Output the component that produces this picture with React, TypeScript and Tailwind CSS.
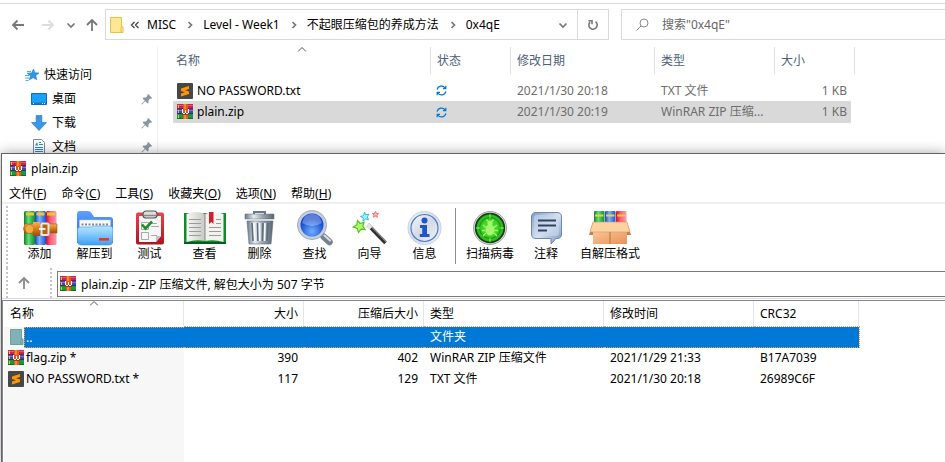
import type { ReactNode } from "react";

function WinRarIcon() {
  return (
    <svg viewBox="0 0 16 16" className="size-4 shrink-0" shapeRendering="crispEdges" aria-hidden="true">
      <path fill="#c92452" d="M0 0h16v5H0z" />
      <path fill="#8c1638" d="M0 4h16v1H0z" />
      <path fill="#e0557d" d="M0 1h16v1H0z" />
      <path fill="#3b4bb0" d="M0 5h16v5H0z" />
      <path fill="#27307c" d="M0 9h16v1H0z" />
      <path fill="#6a7ad0" d="M0 6h16v1H0z" />
      <path fill="#199a35" d="M0 10h16v5H0z" />
      <path fill="#0d6b23" d="M0 14h16v1H0z" />
      <path fill="#f2c230" d="M1 1h1v3H1zM1 6h1v3H1zM1 11h1v3H1z" />
      <path fill="#d9601a" d="M6 0h5v15H6z" />
      <path fill="#f08a34" d="M7 0h2v15H7z" />
      <path fill="#9a3a20" d="M5 5h7v6H5z" />
      <path fill="#e2541b" d="M6 5h5v4H6z" />
      <path fill="#fff" d="M5 5h1v4H5zM11 5h1v4h-1zM6 9h2v1H6zM9 9h2v1H9zM8 6h1v3H8z" />
    </svg>
  );
}

function SublimeIcon() {
  return (
    <svg viewBox="0 0 16 16" className="size-4 shrink-0" aria-hidden="true">
      <rect width="16" height="16" rx="1" fill="#474747" />
      <path fill="#ff9800" d="M4 5.400 12 3v2.900L8 7.200l4 1.300v2.600L4 13.400v-2.900l4-1.300L4 8z" />
    </svg>
  );
}

function FolderIcon({ fill, stroke, name }: { fill: string; stroke: string; name: string }) {
  return (
    <svg viewBox="0 0 14 16" className={name} aria-hidden="true">
      <path fill={fill} stroke={stroke} d="M.5.5h11v9.5h1.500v5.500H.5z" />
      <path fill="none" stroke={stroke} d="M11 15v-4.500l1-1" />
    </svg>
  );
}

function Arrow({ dir, color }: { dir: "left" | "right" | "up"; color: string }) {
  const d = {
    left: "M14 8H3M7.500 3.500 3 8l4.500 4.500",
    right: "M2 8h11M8.500 3.500 13 8l-4.500 4.500",
    up: "M8 14V3M3 8l5-5 5 5",
  };
  return (
    <svg viewBox="0 0 16 16" className="size-4" fill="none" stroke={color} strokeWidth="1.800" aria-hidden="true">
      <path d={d[dir]} />
    </svg>
  );
}

function Chevron({ down = false }: { down?: boolean }) {
  return (
    <svg viewBox="0 0 10 10" className="size-2.5 shrink-0" fill="none" stroke="#777" strokeWidth="1.700" aria-hidden="true">
      <path d={down ? "M1.500 3.500 5 7l3.500-3.500" : "M3.500 2l3 3-3 3"} />
    </svg>
  );
}

function SortMark() {
  return (
    <svg viewBox="0 0 9 5" className="absolute top-0 left-1/2 h-[5px] w-[9px] -translate-x-1/2" fill="none" stroke="#555" aria-hidden="true">
      <path d="M.5 4.500l4-4 4 4" />
    </svg>
  );
}

function SyncIcon() {
  return (
    <svg viewBox="0 0 12 12" className="ml-[5px] size-[11px]" fill="none" stroke="#0078d7" strokeWidth="1.300" role="img" aria-label="同步中">
      <path d="M1.200 5A4.900 4.900 0 0 1 10 3.300M10.800 7A4.900 4.900 0 0 1 2 8.700M10.700.8v3.100H7.600M1.300 11.200V8.100h3.100" />
    </svg>
  );
}

function PinIcon() {
  return (
    <svg viewBox="0 0 12 12" className="size-3" aria-hidden="true">
      <path fill="#8a98a5" d="M7 .8 11.200 5l-1.200.7-.7-.2-1.800 1.800.1 2.200-1 1L4.300 8.200 1 11.600l-.6-.6 3.400-3.300L1.500 5.400l1-1 2.200.1L6.500 2.700l-.2-.7z" />
    </svg>
  );
}

const sideIcons: Record<string, ReactNode> = {
  star: (
    <svg viewBox="0 0 16 16" className="size-4" aria-hidden="true">
      <path fill="#2a9ae8" stroke="#1a78c8" strokeWidth=".6" d="M9.500 2l1.300 3.800 4.200.2-3.300 2.600 1.100 4.200-3.600-2.200-4 2.300 1.400-4L3.200 6.200l4.600-.3z" />
      <path stroke="#45acee" d="M1 8.500h4M1 11h4M1.500 13.500h3M3 4.500h4" />
    </svg>
  ),
  desktop: (
    <svg viewBox="0 0 16 16" className="size-4" aria-hidden="true">
      <path fill="#18a0fb" stroke="#0b6fbd" d="M.5 2.500h15v11H.5z" />
      <path fill="#1478c8" d="M1 11.500h14V13H1z" />
      <path fill="#d8efff" d="M2 12h1v1H2zM11 12h1v1h-1zM13 12h1v1h-1z" />
    </svg>
  ),
  download: (
    <svg viewBox="0 0 16 16" className="size-4" aria-hidden="true">
      <path fill="#3a97e8" stroke="#2479c6" strokeWidth=".7" d="M5.200.6h5.600v7h4.600L8 15.500.6 7.600h4.600z" />
    </svg>
  ),
  document: (
    <svg viewBox="0 0 16 16" className="size-4" aria-hidden="true">
      <path fill="#fff" stroke="#7d8790" d="M2.500.5h8l3 3v12h-11z" />
      <path stroke="#2a8ad6" d="M8 3.500h2M8 5.500h4M4 8.500h8M4 10.500h8M4 12.500h8" />
      <path fill="#2a8ad6" d="M4 6.500 6 3l1 3.500z" />
    </svg>
  ),
};

const sideItems = [
  { icon: "desktop", label: "桌面" },
  { icon: "download", label: "下载" },
  { icon: "document", label: "文档" },
];

const crumbs = ["MISC", "Level - Week1", "不起眼压缩包的养成方法", "0x4qE"];

const explorerRows = [
  { icon: <SublimeIcon />, name: "NO PASSWORD.txt", date: "2021/1/30 20:18", type: "TXT 文件", size: "1 KB", selected: false },
  { icon: <WinRarIcon />, name: "plain.zip", date: "2021/1/30 20:19", type: "WinRAR ZIP 压缩...", size: "1 KB", selected: true },
];

function Explorer() {
  return (
    <section className="h-[153px] pt-[3px]">
      <div className="flex h-11 items-start border-t border-[#d9d9d9] pt-[5px]">
        <nav className="flex h-[31px] w-[105px] shrink-0 items-center pl-2.5">
          <button aria-label="后退"><Arrow dir="left" color="#777" /></button>
          <button aria-label="前进" className="ml-3.5"><Arrow dir="right" color="#dcdcdc" /></button>
          <button aria-label="最近位置" className="ml-2.5"><Chevron down /></button>
          <button aria-label="上移" className="ml-2"><Arrow dir="up" color="#777" /></button>
        </nav>
        <div className="flex h-[31px] w-[504px] shrink-0 items-center border border-[#d9d9d9]">
          <FolderIcon fill="#ffe793" stroke="#eac04c" name="ml-1 h-4 w-3.5 shrink-0" />
          <svg viewBox="0 0 10 10" className="ml-1.5 size-2.5" fill="none" stroke="#444" strokeWidth="1.300" aria-hidden="true">
            <path d="M4.500 2l-3 3 3 3M8.500 2l-3 3 3 3" />
          </svg>
          <ol className="ml-[7px] flex items-center">
            {crumbs.map((crumb, i) => (
              <li key={crumb} className="flex items-center">
                {i > 0 && <span className="mr-2 ml-[9px] flex"><Chevron /></span>}
                <a href="#" className="whitespace-nowrap">{crumb}</a>
              </li>
            ))}
          </ol>
          <button aria-label="历史记录" className="mr-[9px] ml-auto"><Chevron down /></button>
          <button aria-label="刷新" className="flex h-full w-[31px] items-center justify-center border-l border-[#d9d9d9]">
            <svg viewBox="0 0 12 12" className="size-3" fill="none" stroke="#777" strokeWidth="1.600" aria-hidden="true">
              <path d="M8.500 2.600a4.200 4.200 0 1 1-5.500.5M1.500 1.800H5v3.400" />
            </svg>
          </button>
        </div>
        <label className="ml-3 flex h-[31px] flex-1 items-center border border-r-0 border-[#d9d9d9] pl-3.5">
          <svg viewBox="0 0 13 13" className="size-[13px] shrink-0" fill="none" stroke="#888" aria-hidden="true">
            <circle cx="8" cy="5" r="4" />
            <path d="M5 8 .5 12.500" />
          </svg>
          <input aria-label="搜索" placeholder={'搜索"0x4qE"'} className="ml-[13px] min-w-0 flex-1 outline-none placeholder:text-[#666]" />
        </label>
      </div>
      <div className="flex">
        <aside className="h-[106px] w-[158px] shrink-0 border-r border-[#f0f0f0] pt-4">
          <div className="flex h-6 items-center gap-1 pl-6">{sideIcons.star}快速访问</div>
          {sideItems.map((item) => (
            <div key={item.label} className="flex h-6 items-center gap-[5px] pr-1 pl-[31px]">
              {sideIcons[item.icon]}
              {item.label}
              <span className="ml-auto"><PinIcon /></span>
            </div>
          ))}
        </aside>
        <table className="ml-[15px] w-[682px] table-fixed border-separate border-spacing-0 self-start text-left text-[#6d6d6d]">
          <colgroup>
            <col className="w-[258px]" />
            <col className="w-20" />
            <col className="w-36" />
            <col className="w-[120px]" />
            <col className="w-20" />
          </colgroup>
          <thead className="text-[#4c607a]">
            <tr className="h-[33px]">
              {["名称", "状态", "修改日期", "类型", "大小"].map((head, i) => (
                <th key={head} className="p-0 align-top font-normal">
                  <div className={`relative flex h-[27px] items-center border-r border-[#e2e2e2] ${i === 0 ? "pl-[3px]" : "pl-1.5"}`}>
                    {head}
                    {i === 0 && <SortMark />}
                  </div>
                </th>
              ))}
            </tr>
          </thead>
          <tbody>
            {explorerRows.map((row) => (
              <tr key={row.name} className={row.selected ? "h-[22px] *:bg-[#d9d9d9]" : "h-[21px]"}>
                <td className="p-0 pl-1 text-black">
                  <div className="flex items-center gap-1">{row.icon}{row.name}</div>
                </td>
                <td className="p-0"><SyncIcon /></td>
                <td className="p-0 pl-1.5">{row.date}</td>
                <td className="p-0 pl-1.5 whitespace-nowrap">{row.type}</td>
                <td className="border-r-4 border-transparent bg-clip-padding p-0 pr-1 text-right">{row.size}</td>
              </tr>
            ))}
          </tbody>
        </table>
      </div>
    </section>
  );
}

/* Shared gradients for the large toolbar pictures. */
function Gradients() {
  return (
    <svg className="absolute size-0" aria-hidden="true">
      <defs>
        <linearGradient id="bookGreen"><stop offset="0" stopColor="#147a28" /><stop offset=".4" stopColor="#5fe07a" /><stop offset="1" stopColor="#128a2c" /></linearGradient>
        <linearGradient id="bookBlue"><stop offset="0" stopColor="#1746c0" /><stop offset=".4" stopColor="#7db2ff" /><stop offset="1" stopColor="#1c50cf" /></linearGradient>
        <linearGradient id="bookRed"><stop offset="0" stopColor="#c8102c" /><stop offset=".4" stopColor="#ff5b78" /><stop offset="1" stopColor="#f0a0b0" /></linearGradient>
        <linearGradient id="belt" x2="0" y2="1"><stop offset="0" stopColor="#f6b25a" /><stop offset=".5" stopColor="#d97a18" /><stop offset="1" stopColor="#9c4c08" /></linearGradient>
        <linearGradient id="folderBack" x2="0" y2="1"><stop offset="0" stopColor="#5fa0ff" /><stop offset="1" stopColor="#1e5fe0" /></linearGradient>
        <linearGradient id="folderFront" x2="0" y2="1"><stop offset="0" stopColor="#b9e6ff" /><stop offset=".5" stopColor="#7cc6ff" /><stop offset="1" stopColor="#3f9cf5" /></linearGradient>
        <linearGradient id="metal"><stop offset="0" stopColor="#6b7684" /><stop offset=".3" stopColor="#e3e9f0" /><stop offset=".6" stopColor="#9aa6b4" /><stop offset="1" stopColor="#5a6572" /></linearGradient>
        <linearGradient id="page"><stop offset="0" stopColor="#f8f8f6" /><stop offset="1" stopColor="#c8c8c4" /></linearGradient>
        <linearGradient id="redBoard" x2="0" y2="1"><stop offset="0" stopColor="#f0414d" /><stop offset="1" stopColor="#a81620" /></linearGradient>
        <radialGradient id="lens" cy=".75"><stop offset="0" stopColor="#6fb0ff" /><stop offset="1" stopColor="#1748cf" /></radialGradient>
        <linearGradient id="silver" x2="1" y2="1"><stop offset="0" stopColor="#f4f6f9" /><stop offset=".5" stopColor="#d4dae2" /><stop offset="1" stopColor="#f2f4f7" /></linearGradient>
        <radialGradient id="radar"><stop offset="0" stopColor="#5cf03c" /><stop offset="1" stopColor="#22b416" /></radialGradient>
        <linearGradient id="bubble" x2="1" y2="1"><stop offset="0" stopColor="#7f9cc4" /><stop offset=".5" stopColor="#d6e3f3" /><stop offset="1" stopColor="#7291bd" /></linearGradient>
        <linearGradient id="carton" x2="1" y2="1"><stop offset="0" stopColor="#f9c795" /><stop offset="1" stopColor="#e8935a" /></linearGradient>
      </defs>
    </svg>
  );
}

const pictures: Record<string, ReactNode> = {
  add: (
    <>
      <rect x="2" y="1" width="11" height="34" rx="1.500" fill="url(#bookGreen)" />
      <rect x="13" y="1" width="11" height="34" rx="1.500" fill="url(#bookBlue)" />
      <rect x="24" y="1" width="10.500" height="34" rx="1.500" fill="url(#bookRed)" />
      <path stroke="#f4c52e" strokeWidth="3" d="M4 4h8M14.500 4h8M25 4h8" />
      <path fill="url(#belt)" stroke="#a35a10" strokeWidth=".6" d="M3 14h32v9H3q-3-4.500 0-9z" />
      <circle cx="7.500" cy="19" r="4.500" fill="#f5aa42" stroke="#a35a10" strokeWidth=".6" />
      <path fill="url(#belt)" d="M11 12h7v14h-7z" />
      <rect x="19.500" y="13.500" width="7" height="11.500" rx="1" fill="#b76412" stroke="#e9e9e9" strokeWidth="2" />
      <path stroke="#f5f5f5" strokeWidth="1.800" d="M17 19h6.500" />
    </>
  ),
  extract: (
    <>
      <path fill="url(#folderBack)" d="M0 33V4q0-3 3-3h8q2 0 3.500 2L17 7h16q3 0 3 3v23z" />
      <path fill="#f7f9fc" stroke="#bccbe0" strokeWidth=".5" d="M2.500 10h31v11h-31z" />
      <path stroke="#808a96" strokeWidth="2" strokeDasharray="2 1.500" d="M4.500 14.500h27" />
      <path fill="url(#folderFront)" stroke="#3f92ea" strokeWidth=".6" d="M.4 20q0-3 3-3h9q2 0 3-.5t3-.5h14.500q3 0 3 3v12q0 4-4 4H4.400q-4 0-4-4z" />
      <rect x="22" y="28" width="10" height="2.600" fill="#e8391b" />
    </>
  ),
  test: (
    <>
      <rect x="4" y="2.500" width="28" height="32" rx="2" fill="url(#redBoard)" />
      <path fill="#f6f6f6" d="M7 6h22v20l-5 6H7z" />
      <path fill="#c2c2c2" d="M29 26l-5 6v-6z" />
      <path fill="none" stroke="#a8a8a8" d="M9.500 12.500h7v7h-7zM9.500 22.500h7v7h-7zM19 16.500h8M19 13.500h6M19 25.500h6" />
      <path fill="none" stroke="#1e8f2c" strokeWidth="2.600" d="M10 14.500l3.500 4 6.500-7" />
      <rect x="11" y="1" width="14" height="7" rx="3" fill="#dedede" stroke="#555" strokeWidth="1.200" />
      <path stroke="#888" strokeWidth="1.500" d="M12 5.500h12" />
    </>
  ),
  view: (
    <>
      <path fill="#128a2c" d="M0 3h42v31H0z" />
      <path fill="#0a5c1b" d="M0 32h42v2H0z" />
      <path fill="url(#page)" d="M2.500 4q10-4 18.500 0v27q-9-2-18.500 1z" />
      <path fill="#f2f2ef" d="M39.500 4q-10-4-18.500 0v27q9-2 18.500 1z" />
      <path stroke="#9a9a9a" d="M5 9.500h12M5 13.500h12M5 17.500h12M5 21.500h12M5 25.500h12M25 17.500h12M25 21.500h12M25 25.500h12M32 9.500h5M32 13.500h5" />
      <path stroke="#888" d="M21 4v27" />
      <path fill="#cf2030" d="M25 2h4.500v12l-2.200-2-2.300 2z" />
    </>
  ),
  remove: (
    <>
      <path fill="none" stroke="#68798c" strokeWidth="2" d="M12 4V2h11v2" />
      <path fill="url(#metal)" stroke="#60707f" strokeWidth=".5" d="M3 4h29v5H3z" />
      <path fill="url(#metal)" stroke="#5d6b7a" strokeWidth=".6" d="M5 11h26l-2 23H7z" />
      <path fill="none" stroke="#5e6d7d" strokeWidth="1.600" d="M10 13l1 18M15.500 13l.5 18M21 13l-.5 18M26 13l-1 18" />
      <path fill="none" stroke="#f5f8fb" strokeWidth="1.800" d="M12 13l1 18M17.500 13l.300 18M23 13l-.500 18" />
    </>
  ),
  find: (
    <>
      <path stroke="#76808c" strokeWidth="6.500" strokeLinecap="round" d="M26.500 26.500l6 5.500" />
      <path stroke="#d9dee4" strokeWidth="2" strokeLinecap="round" d="M27.500 25.500l5.500 5" />
      <circle cx="15" cy="15" r="13" fill="url(#lens)" stroke="#c4cdd9" strokeWidth="3" />
      <circle cx="15" cy="15" r="14.600" fill="none" stroke="#7f8b9b" strokeWidth=".6" />
      <path fill="#fff" opacity=".3" d="M5 13q2-9 10-9t10 9q-10 6-20 0z" />
    </>
  ),
  wizard: (
    <>
      <path stroke="#333" strokeWidth="3.600" d="M16 15l17.500 18" />
      <path stroke="#8d8d8d" strokeWidth="1.200" d="M16.500 13.500l18 18.500" />
      <path stroke="#e5e5e5" strokeWidth="4" d="M15.300 14.300l3.700 3.800" />
      <path fill="#b4f76a" stroke="#55c428" strokeWidth="1.200" d="M5.500 10.500l2.600 3 4-1.300-1.300 4 2.300 3.300-4-.3L6.500 22.500l-1.300-4L1 17l3.800-2.200z" />
      <path fill="#a5f2ff" stroke="#2fbfe0" d="M12.500 2l1.200 2.600 3.300-.4-1.800 2.600 1.300 3-3-.8-2.500 2.200.3-3-2.800-1.800 3.200-.7z" />
      <path fill="#ffb8b8" stroke="#ed6a6a" strokeWidth=".9" d="M23.500 1.500l.8 1.800 2.300.2-1.700 1.500.5 2.300-1.900-1.200-2 1.200.5-2.300-1.600-1.500 2.200-.2z" />
    </>
  ),
  info: (
    <>
      <circle cx="17.500" cy="18" r="16.500" fill="url(#silver)" stroke="#c9d0d9" />
      <circle cx="17.500" cy="18" r="13.500" fill="url(#silver)" stroke="#4a7ad4" strokeWidth="1.200" />
      <circle cx="17.500" cy="10.500" r="3" fill="#1f55cc" />
      <path fill="#1f55cc" d="M13 15h7v9h2.500v3h-9.700v-3h2.400v-6H13z" />
    </>
  ),
  virus: (
    <>
      <circle cx="18" cy="18" r="16.500" fill="#e1e3e4" stroke="#8d8d8d" strokeWidth=".8" />
      <circle cx="18" cy="18" r="14.300" fill="url(#radar)" stroke="#1d3b1d" strokeWidth="1.800" />
      <circle cx="18" cy="18" r="10.500" fill="none" stroke="#108010" strokeWidth=".8" />
      <path stroke="#7fff5f" d="M18 4v4M18 28v4M4 18h4M28 18h4" />
      <ellipse cx="18" cy="20" rx="4.500" ry="5.500" fill="#a6f56c" />
      <circle cx="18" cy="13" r="2.500" fill="#a6f56c" />
      <path fill="none" stroke="#a6f56c" strokeWidth="1.300" d="M14 17.500l-3-2.500M22 17.500l3-2.500M13.500 20.500h-3.500M22.500 20.500H26M14 23l-3 3M22 23l3 3M16 11.500l-1.500-2M20 11.500l1.500-2" />
    </>
  ),
  comment: (
    <>
      <path fill="url(#bubble)" stroke="#7088ab" d="M8 2.500h21q4.500 0 4.500 4.500v17q0 4.500-4.500 4.500h-1l-5 5.500v-5.500H8q-4.500 0-4.500-4.500V7q0-4.500 4.500-4.500z" />
      <rect x="6" y="5" width="25" height="21" rx="3" fill="#c9d9ed" fillOpacity=".6" />
      <path stroke="#33435c" strokeWidth="1.800" d="M10 10.500h18M10 15.500h18M10 20.500h9" />
    </>
  ),
  sfx: (
    <>
      <rect x="5" y="1" width="10.500" height="18" rx="1" fill="url(#bookGreen)" />
      <rect x="16" y="1" width="10.500" height="18" rx="1" fill="url(#bookBlue)" />
      <rect x="27" y="1" width="10.500" height="18" rx="1" fill="url(#bookRed)" />
      <path stroke="#f4d12e" strokeWidth="2" d="M6 5.500h8.500M17 5.500h8.500M28 5.500h8.500" />
      <path fill="#c97b46" d="M4 12l-4 13h5zM38 12l4 13h-5z" />
      <path fill="url(#carton)" d="M4 21h34v13H4z" />
      <path fill="#fbd3a3" stroke="#d99560" strokeWidth=".6" d="M4 12h34l3 10H1z" />
      <path stroke="#b9703c" d="M21 22v12" />
    </>
  ),
};

function ToolButton({ icon, label, wide = false, width }: { icon: string; label: string; wide?: boolean; width: string }) {
  return (
    <button className={`flex flex-col items-center pt-1.5 ${width}`}>
      <svg viewBox={wide ? "0 0 42 36" : "0 0 36 36"} className={`h-9 ${wide ? "w-[42px]" : "w-9"}`} fill="none" aria-hidden="true">
        {pictures[icon]}
      </svg>
      <span className="leading-4 whitespace-nowrap">{label}</span>
    </button>
  );
}

const menus = [["文件", "F"], ["命令", "C"], ["工具", "S"], ["收藏夹", "O"], ["选项", "N"], ["帮助", "H"]];

const tools = [
  ["add", "添加"],
  ["extract", "解压到"],
  ["test", "测试"],
  ["view", "查看"],
  ["remove", "删除"],
  ["find", "查找"],
  ["wizard", "向导"],
  ["info", "信息"],
];

const files = [
  { icon: <WinRarIcon />, name: "flag.zip *", size: "390", packed: "402", type: "WinRAR ZIP 压缩文件", time: "2021/1/29 21:33", crc: "B17A7039" },
  { icon: <SublimeIcon />, name: "NO PASSWORD.txt *", size: "117", packed: "129", type: "TXT 文件", time: "2021/1/30 20:18", crc: "26989C6F" },
];

const columns = [
  { label: "名称", align: "pl-1.5" },
  { label: "大小", align: "justify-end pr-[5px]" },
  { label: "压缩后大小", align: "justify-end pr-[5px]" },
  { label: "类型", align: "pl-1.5" },
  { label: "修改时间", align: "pl-1.5" },
  { label: "CRC32", align: "pl-1.5" },
];

function Archive() {
  return (
    <section className="relative z-10 ml-px flex flex-1 flex-col border-t border-l border-[#646464] bg-white shadow-[0_0_12px_rgba(0,0,0,0.35)]">
      <Gradients />
      <header className="flex h-[29px] items-center gap-[5px] pl-2">
        <WinRarIcon />
        <h1>plain.zip</h1>
      </header>
      <nav className="flex h-[21px] items-end gap-[15px] border-b-2 border-[#f0f0f0] pl-[7px]">
        {menus.map(([label, key]) => (
          <button key={key} className="whitespace-nowrap">{label}(<u>{key}</u>)</button>
        ))}
      </nav>
      <div className="flex h-16 pl-1">
        <span className="mt-0.5 mr-1 border-l-2 border-dotted border-[#c4c4c4]" />
        {tools.map(([icon, label]) => (
          <ToolButton key={icon} icon={icon} label={label} wide={icon === "view"} width="w-[55px]" />
        ))}
        <span className="mt-1 mr-1.5 mb-1 ml-[3px] border-l border-[#8c8c8c]" />
        <ToolButton icon="virus" label="扫描病毒" width="w-14" />
        <ToolButton icon="comment" label="注释" width="w-14" />
        <ToolButton icon="sfx" label="自解压格式" wide width="w-[72px]" />
      </div>
      <div className="flex h-[31px] border-b border-[#dcdcdc] pl-1">
        <span className="border-l-2 border-dotted border-[#c4c4c4]" />
        <button aria-label="上一级" className="flex w-8 items-center justify-center"><Arrow dir="up" color="#8a8a8a" /></button>
        <span className="ml-2.5 border-l-2 border-dotted border-[#c4c4c4]" />
        <label className="mt-[3px] ml-[5px] flex h-[26px] flex-1 items-center gap-[5px] border border-r-0 border-[#7a7a7a] pl-0.5">
          <WinRarIcon />
          <input aria-label="路径" defaultValue="plain.zip - ZIP 压缩文件, 解包大小为 507 字节" className="min-w-0 flex-1 pt-0.5 outline-none" />
        </label>
      </div>
      <div className="mt-px flex flex-1 border-t border-l border-[#828790] pl-px">
        <table className="w-[855px] table-fixed text-left">
          <colgroup>
            <col className="w-[180px]" />
            <col className="w-[120px]" />
            <col className="w-[120px]" />
            <col className="w-[180px]" />
            <col className="w-[150px]" />
            <col className="w-[105px]" />
          </colgroup>
          <thead>
            <tr className="h-[25px]">
              {columns.map((col, i) => (
                <th key={col.label} className="p-0 font-normal">
                  <div className={`relative flex h-[25px] items-center border-r border-[#e5e5e5] ${col.align}`}>
                    {col.label}
                    {i === 0 && <SortMark />}
                  </div>
                </th>
              ))}
            </tr>
          </thead>
          <tbody>
            <tr className="h-[21px] text-white">
              <td className="bg-[#f7f7f7] p-0">
                <div className="flex h-[21px] items-center">
                  <span className="flex w-5 shrink-0 justify-end">
                    <FolderIcon fill="#80b0b8" stroke="#709f96" name="h-4 w-3.5" />
                  </span>
                  <span className="h-full flex-1 border border-r-0 border-dotted border-[#ff9a3c] bg-[#0078d7] pl-px leading-[19px]">..</span>
                </div>
              </td>
              <td className="border-y border-dotted border-[#ff9a3c] bg-[#0078d7] p-0" />
              <td className="border-y border-dotted border-[#ff9a3c] bg-[#0078d7] p-0" />
              <td className="border-y border-dotted border-[#ff9a3c] bg-[#0078d7] p-0 pl-1.5">文件夹</td>
              <td className="border-y border-dotted border-[#ff9a3c] bg-[#0078d7] p-0" />
              <td className="border-y border-r border-dotted border-[#ff9a3c] bg-[#0078d7] p-0" />
            </tr>
            {files.map((file) => (
              <tr key={file.name} className="h-[21px]">
                <td className="bg-[#f7f7f7] p-0 pl-1">
                  <div className="flex items-center gap-0.5">{file.icon}{file.name}</div>
                </td>
                <td className="p-0 pr-1.5 text-right">{file.size}</td>
                <td className="p-0 pr-1.5 text-right">{file.packed}</td>
                <td className="p-0 pl-1.5">{file.type}</td>
                <td className="p-0 pl-1.5">{file.time}</td>
                <td className="p-0 pl-1.5">{file.crc}</td>
              </tr>
            ))}
            <tr aria-hidden="true">
              <td className="bg-[#f7f7f7] p-0" />
              <td colSpan={5} className="p-0" />
            </tr>
          </tbody>
        </table>
      </div>
    </section>
  );
}

export default function App() {
  return (
    <main lang="zh-CN" className="flex min-h-screen flex-col overflow-hidden bg-white font-['Noto_Sans','Noto_Sans_CJK_SC',sans-serif] text-[12px] leading-4 text-black">
      <Explorer />
      <Archive />
    </main>
  );
}
